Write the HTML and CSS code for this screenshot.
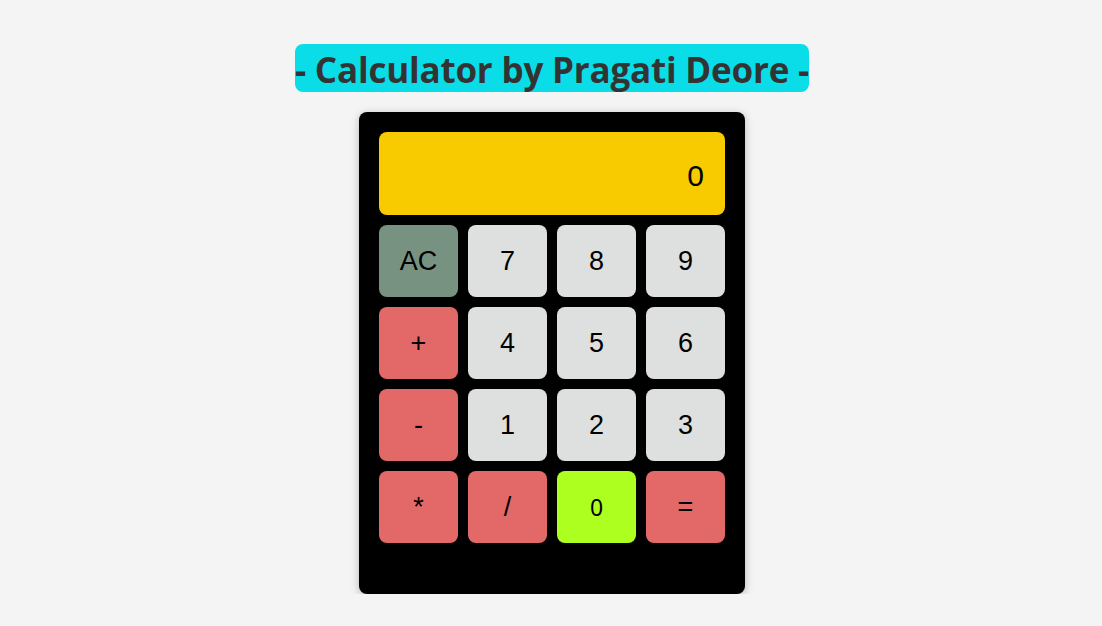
FILE: index.html
```html
<!DOCTYPE html>
<html>
<head>
<meta charset="utf-8">
<title>Calculator</title>
<link rel="stylesheet" href="styles.css">
</head>
<body>
<div class="page">
  <h1 class="title">- Calculator by Pragati Deore -</h1>
  <div class="calc">
    <div class="display">0</div>
    <div class="keys">
      <button class="key key-clear">AC</button>
      <button class="key key-num">7</button>
      <button class="key key-num">8</button>
      <button class="key key-num">9</button>
      <button class="key key-op">+</button>
      <button class="key key-num">4</button>
      <button class="key key-num">5</button>
      <button class="key key-num">6</button>
      <button class="key key-op">-</button>
      <button class="key key-num">1</button>
      <button class="key key-num">2</button>
      <button class="key key-num">3</button>
      <button class="key key-op">*</button>
      <button class="key key-op">/</button>
      <button class="key key-zero">0</button>
      <button class="key key-op">=</button>
    </div>
  </div>
</div>
</body>
</html>
```
FILE: styles.css
```css
html, body {
  margin: 0;
  padding: 0;
  background: #f4f4f4;
}
.page {
  display: flex;
  flex-direction: column;
  align-items: center;
  padding: 44px 0 0 2px;
  font-family: "Liberation Sans", Arial, sans-serif;
}
.title {
  margin: 0;
  background: #0adde8;
  color: #333333;
  border-radius: 8px;
  font-family: "Open Sans", "Noto Sans", sans-serif;
  font-weight: 700;
  font-size: 35px;
  line-height: 52px;
  height: 48px;
  overflow: hidden;
  letter-spacing: -0.2px;
  white-space: nowrap;
}
.calc {
  margin-top: 20px;
  width: 346px;
  padding: 20px 20px 51px;
  background: #000;
  border-radius: 8px;
  box-shadow: 0 2px 8px rgba(0,0,0,0.25);
}
.display {
  height: 83px;
  box-sizing: border-box;
  background: #f7cb00;
  border-radius: 8px;
  display: flex;
  align-items: center;
  justify-content: flex-end;
  padding: 5px 21px 0;
  font-size: 30px;
  color: #000;
  margin-bottom: 10px;
}
.keys {
  display: grid;
  grid-template-columns: repeat(4, 79px);
  grid-auto-rows: 72px;
  gap: 10px;
}
.key {
  border: none;
  border-radius: 8px;
  font-family: "Liberation Sans", Arial, sans-serif;
  font-size: 27px;
  color: #000;
  padding: 0;
}
.key-clear { background: #789281; }
.key-num { background: #dee0df; }
.key-op { background: #e36868; }
.key-zero { background: #adff20; font-size: 23px; font-family: "Noto Sans", sans-serif; }
```
